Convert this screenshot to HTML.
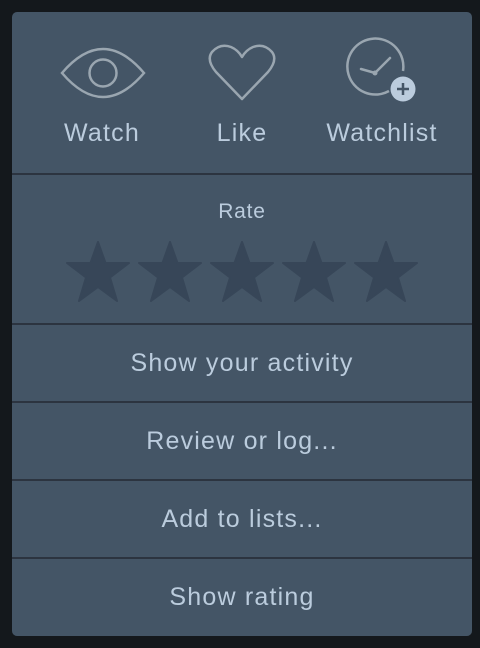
<!DOCTYPE html>
<html><head><meta charset="utf-8"><style>
html,body{margin:0;padding:0;background:#14181c;width:480px;height:648px;overflow:hidden}
.p{position:absolute;left:12px;top:12px;width:460px;height:624px;background:#456;border-radius:5px}
.t{position:absolute;font-family:"Liberation Sans",sans-serif;color:#bcd;white-space:nowrap;text-align:center;font-size:25px;letter-spacing:1.2px}
.l{position:absolute;left:12px;width:460px;height:2px;background:#2c3440}
</style></head><body>
<div class="p"></div>
<svg style="position:absolute;left:0;top:0" width="480" height="648">
 <g fill="none" stroke="#9aa6b0" stroke-width="2.5">
  <path d="M62 73 Q103 25 144 73 Q103 121 62 73Z"/>
  <circle cx="103" cy="73" r="13.5"/>
  <path d="M242 99 L216 72 Q206 60 212 52 Q220 43 231 47 Q238 50 242 57 Q246 50 253 47 Q264 43 272 52 Q278 60 268 72 Z" stroke-linejoin="round"/>
  <path d="M389 91 A28 28 0 1 1 403 71"/>
  <path d="M361 69 L375 73 L390 58" stroke-linecap="round"/>
 </g>
 <circle cx="375" cy="73" r="2.5" fill="#9aa6b0"/>
 <circle cx="403" cy="89" r="12.5" fill="#bcd"/>
 <path d="M397 89H409M403 83V95" stroke="#456" stroke-width="2.5"/>
 <g fill="#374658" stroke="#374658" stroke-width="2" stroke-linejoin="round">
  <path id="s" d="M98 242 L105.5 263 L129 263 L110 277.5 L117 301 L98 287 L79 301 L86 277.5 L67 263 L90.5 263Z"/>
  <use href="#s" x="72"/><use href="#s" x="144"/><use href="#s" x="216"/><use href="#s" x="288"/>
 </g>
</svg>
<div class="t" style="left:42px;width:120px;top:119px">Watch</div>
<div class="t" style="left:182px;width:120px;top:119px">Like</div>
<div class="t" style="left:307px;width:150px;top:119px">Watchlist</div>
<div class="l" style="top:173px"></div>
<div class="t" style="left:12px;width:460px;top:200px;font-size:21px;letter-spacing:0.8px">Rate</div>
<div class="l" style="top:323px"></div>
<div class="t" style="left:12px;width:460px;top:349px">Show your activity</div>
<div class="l" style="top:401px"></div>
<div class="t" style="left:12px;width:460px;top:427px">Review or log...</div>
<div class="l" style="top:479px"></div>
<div class="t" style="left:12px;width:460px;top:505px">Add to lists...</div>
<div class="l" style="top:557px"></div>
<div class="t" style="left:12px;width:460px;top:583px">Show rating</div>
</body></html>
